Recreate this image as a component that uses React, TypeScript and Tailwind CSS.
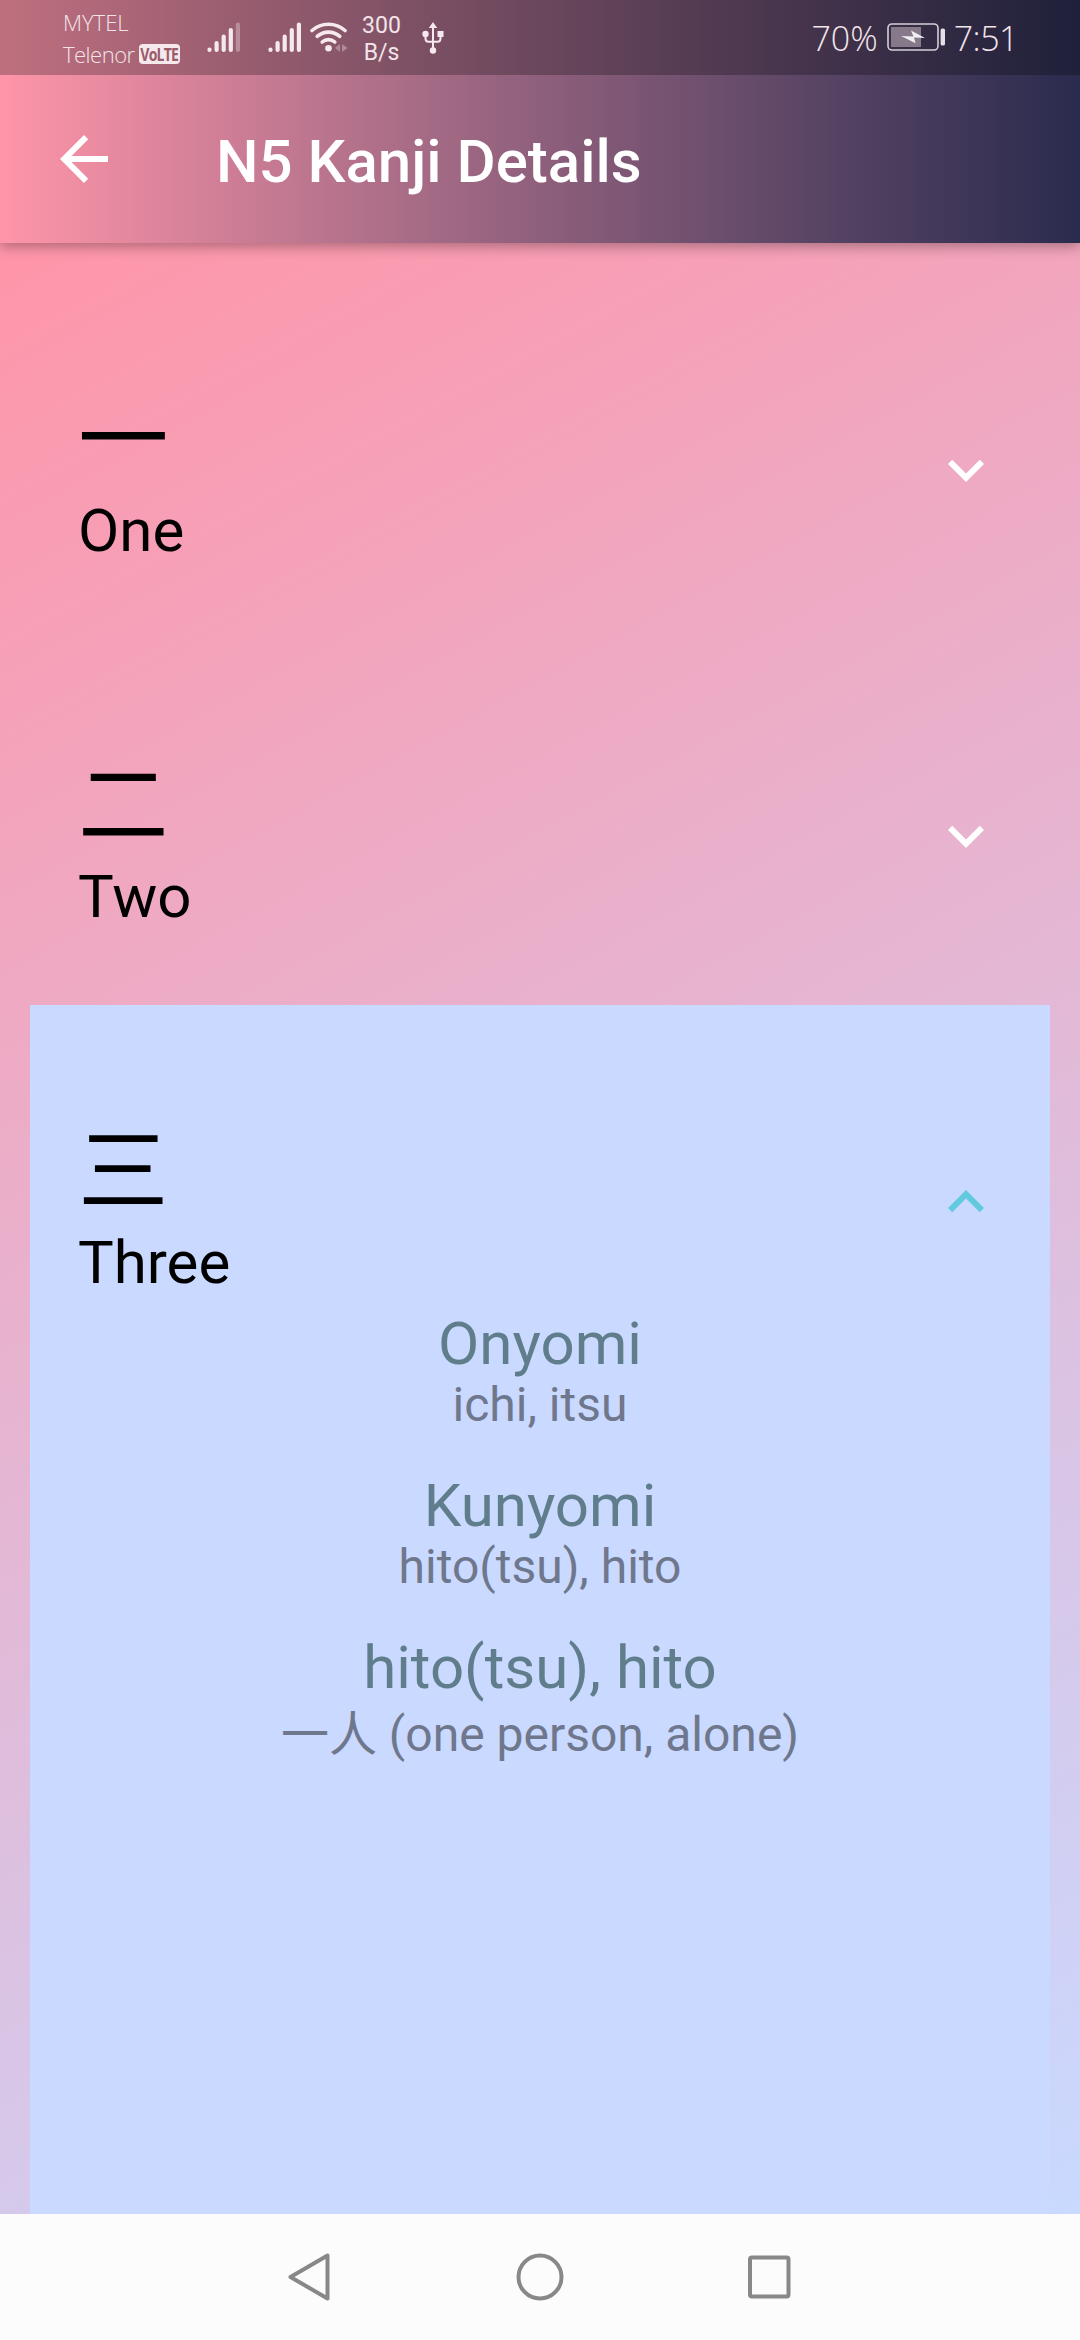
import React from "react";

type Reading = { heading: string; detail: string };
type Kanji = { glyph: string; meaning: string; readings?: Reading[] };

const KANJI: Kanji[] = [
  { glyph: "一", meaning: "One" },
  { glyph: "二", meaning: "Two" },
  {
    glyph: "三",
    meaning: "Three",
    readings: [
      { heading: "Onyomi", detail: "ichi, itsu" },
      { heading: "Kunyomi", detail: "hito(tsu), hito" },
      { heading: "hito(tsu), hito", detail: "一人 (one person, alone)" },
    ],
  },
];

function Signal({ weak = false }: { weak?: boolean }) {
  return (
    <svg width="34" height="32" viewBox="0 0 34 32" fill="none" stroke="#f6e9ee" strokeWidth="4.2" strokeLinecap="round">
      <path d="M2.5 28.6v.4M9.6 22v7M16.7 15.5V29M23.8 9v20" />
      <path d="M30.9 3.6V29" opacity={weak ? 0.35 : 1} />
    </svg>
  );
}

function Wifi() {
  return (
    <svg width="38" height="32" viewBox="0 0 38 32" fill="none">
      <g stroke="#f6e9ee" strokeWidth="3.6" strokeLinecap="round">
        <path d="M2 9.5a25 25 0 0 1 33 0" />
        <path d="M7.2 15.4a17 17 0 0 1 22.6 0" />
        <path d="M12.2 21a9.6 9.6 0 0 1 12.6 0" />
      </g>
      <circle cx="18.5" cy="27.2" r="3.3" fill="#f6e9ee" />
      <path d="M30 23v8l-5-4zM32 23v8l5.500-4z" fill="#f6e9ee" opacity=".35" />
    </svg>
  );
}

function Usb() {
  return (
    <svg width="22" height="32" viewBox="0 0 22 32" fill="none" stroke="#f6e9ee" strokeWidth="2">
      <path d="M11 5v23M3.500 13v3.500q0 3.200 3 3.200h9q3 0 3-3.200V13" />
      <g fill="#f6e9ee" stroke="none">
        <path d="M11 0l4.200 6H6.800z" />
        <circle cx="3.500" cy="12" r="3.200" />
        <path d="M15.500 9h6v6h-6z" />
        <circle cx="11" cy="28.500" r="3.200" />
      </g>
    </svg>
  );
}

function Battery() {
  return (
    <svg width="59" height="28" viewBox="0 0 59 28" fill="none">
      <rect x="1" y="1" width="50" height="26" rx="4" stroke="#d5cfd8" strokeWidth="1.600" />
      <rect x="4" y="4" width="30" height="20" fill="#85798a" />
      <path d="M14 13l12.500.5L24 7.500 38 15l-11-.6 1.600 5.800z" fill="#f1eef3" />
      <rect x="53.600" y="5.500" width="4.400" height="17" rx="1.600" fill="#e3dfe6" />
    </svg>
  );
}

function StatusBar() {
  return (
    <div className="flex h-[75px] items-start bg-black/25 pr-[62px] pl-[63px] font-['Open_Sans',sans-serif] font-light text-[#f3e4ea]">
      <div className="w-[120px] pt-[6px] text-[22px] leading-[32px]">
        <div>MYTEL</div>
        <div className="flex items-center">
          <span className="w-[76px] tracking-[-0.5px]">Telenor</span>
          <span className="flex h-[20px] w-[41px] items-center justify-center rounded-[4px] bg-[#f6e9ee] text-[18px] leading-[20px] font-bold tracking-[-1px] text-[#9a5b6b]">
            <span className="scale-x-[0.78]">VoLTE</span>
          </span>
        </div>
      </div>
      <div className="ml-[24px] pt-[21px]"><Signal weak /></div>
      <div className="ml-[27px] pt-[21px]"><Signal /></div>
      <div className="ml-[8px] pt-[21px]"><Wifi /></div>
      <div className="ml-[8px] w-[51px] pt-[12px] text-center font-[Roboto,sans-serif] text-[23px] leading-[27px] font-normal">
        <div>300</div>
        <div>B/s</div>
      </div>
      <div className="ml-[15px] pt-[22px]"><Usb /></div>
      <div className="ml-auto flex items-start">
        <span className="mr-[9px] pt-[14px] text-[34px] leading-[48px]">70%</span>
        <span className="pt-[23px]"><Battery /></span>
        <span className="ml-[8px] pt-[14px] text-[34px] leading-[48px] tracking-[-0.5px]">7:51</span>
      </div>
    </div>
  );
}

function KanjiTile({ kanji }: { kanji: Kanji }) {
  const open = Boolean(kanji.readings);
  return (
    <section className={open ? "mx-[30px] h-[1209px] bg-[#c9d9ff]" : "mx-[30px] h-[366px]"}>
      <button className="flex h-[304px] w-full items-start justify-between pr-[48px] pl-[48px] text-left text-black">
        <span className="block pt-[94px]">
          <span lang="zh-CN" className="block h-[129px] font-['Noto_Sans_CJK_SC',sans-serif] text-[90.5px] leading-[130px]">{kanji.glyph}</span>
          <span className="block text-[60px] leading-[70px]">{kanji.meaning}</span>
        </span>
        <svg className={open ? "mt-[161px] text-[#62cadd]" : "mt-[161px] text-white"} width="72" height="72" viewBox="0 0 24 24" fill="currentColor">
          {open ? (
            <path d="M12 8l-6 6 1.410 1.410L12 10.830l4.590 4.580L18 14z" />
          ) : (
            <path d="M16.590 8.590L12 13.170 7.410 8.590 6 10l6 6 6-6z" />
          )}
        </svg>
      </button>
      {kanji.readings?.map((r) => (
        <div key={r.heading} className="mb-[38px] text-center last:mb-0">
          <h2 className="text-[60px] leading-[70px] text-[#607d8b]">{r.heading}</h2>
          <p
            lang="zh-CN"
            className={
              r.detail.startsWith("一")
                ? "mt-[4px] font-[Roboto,'Noto_Sans_CJK_SC',sans-serif] text-[48px] leading-[56px] text-[#6f778c]"
                : "-mt-[2px] font-[Roboto,sans-serif] text-[48px] leading-[56px] text-[#6f778c]"
            }
          >
            {r.detail}
          </p>
        </div>
      ))}
    </section>
  );
}

export default function App() {
  return (
    <div className="flex h-[2340px] w-[1080px] flex-col overflow-hidden font-[Roboto,'Noto_Sans_CJK_SC',sans-serif]">
      <header className="relative z-10 h-[243px] shrink-0 bg-linear-to-r from-[#ff95a9] to-[#2a2b4e] shadow-[0_4px_12px_rgba(0,0,0,0.3)]">
        <StatusBar />
        <div className="flex h-[168px] items-center pl-[48px] text-white">
          <svg width="72" height="72" viewBox="0 0 24 24" fill="currentColor">
            <path d="M20 11H7.830l5.590-5.590L12 4l-8 8 8 8 1.410-1.410L7.830 13H20z" />
          </svg>
          <h1 className="ml-[96px] pt-[5px] text-[60px] leading-[70px] font-medium">N5 Kanji Details</h1>
        </div>
      </header>
      <main className="h-[1971px] shrink-0 overflow-hidden bg-[linear-gradient(151.3deg,#ff95a9,#c9d9ff)] pt-[30px]">
        {KANJI.map((k) => (
          <KanjiTile key={k.glyph} kanji={k} />
        ))}
      </main>
      <nav className="flex h-[126px] shrink-0 items-center justify-center gap-[181px] bg-[#fcfcfc]">
        <svg width="48" height="50" viewBox="0 0 48 50" fill="none" stroke="#888" strokeWidth="4" strokeLinejoin="round">
          <path d="M40.500 3.500v43L3.500 25z" />
        </svg>
        <svg width="48" height="50" viewBox="0 0 48 50" fill="none" stroke="#888" strokeWidth="4">
          <circle cx="24" cy="25" r="21.500" />
        </svg>
        <svg width="48" height="50" viewBox="0 0 48 50" fill="none" stroke="#888" strokeWidth="4">
          <rect x="5" y="5.500" width="38.500" height="39" rx="2" />
        </svg>
      </nav>
    </div>
  );
}
